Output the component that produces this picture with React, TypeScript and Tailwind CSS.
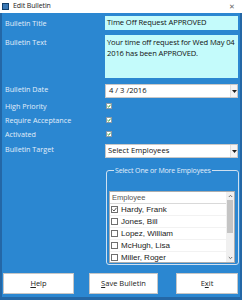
import React from 'react';

const employees = [
  { name: 'Hardy, Frank', checked: true },
  { name: 'Jones, Bill', checked: false },
  { name: 'Lopez, William', checked: false },
  { name: 'McHugh, Lisa', checked: false },
  { name: 'Miller, Roger', checked: false },
];

function GreenCheck() {
  return (
    <div className="w-[6px] h-[6px] bg-white border border-[#8c9aa6] flex items-center justify-center">
      <svg width="4" height="4" viewBox="0 0 4 4">
        <path d="M0.4 2 L1.6 3.2 L3.6 0.7" stroke="#2f9e2f" strokeWidth="1" fill="none" />
      </svg>
    </div>
  );
}

function DropArrow() {
  return (
    <div className="w-[7px] h-full flex items-center justify-center border-l border-[#e0e0e0] bg-[#f4f4f4]">
      <svg width="5" height="3" viewBox="0 0 5 3">
        <path d="M0 0 L5 0 L2.5 3 Z" fill="#222" />
      </svg>
    </div>
  );
}

export default function App() {
  const label = 'pl-[3px] flex items-center text-[7.2px] text-[#e2eefa]';
  return (
    <div className="w-[242px] h-[300px] flex flex-col bg-white overflow-hidden" style={{ fontFamily: '"Open Sans", "Noto Sans", sans-serif' }}>
      {/* title bar */}
      <div className="h-[13px] shrink-0 flex items-center px-[2px] bg-white">
        <div className="w-[7px] h-[7px] bg-[#3a78b5] border border-[#123f6b] mr-[4px]" />
        <span className="text-[7px] text-[#222] tracking-[-0.1px]">Edit Bulletin</span>
        <span className="ml-auto mr-[5px] text-[7px] text-[#666] leading-none">✕</span>
      </div>

      {/* body */}
      <div className="h-[287px] shrink-0 flex flex-col bg-[#2b87d1] border-l-[2px] border-r-[2px] border-b-[3px] border-[#2467a6] pt-[3px]">
        <div className="grid grid-cols-[103px_133px]">
          <div className={label + ' h-[14px]'}>Bulletin Title</div>
          <div className="h-[14px] bg-[#c4fbfb] flex items-center px-[2px] text-[7.6px] tracking-[-0.1px] text-[#111]">Time Off Request APPROVED</div>

          <div className={label + ' h-[14px] mt-[5px] items-start pt-[2px]'}>Bulletin Text</div>
          <div className="mt-[5px] h-[43px] bg-[#c4fbfb] px-[2px] pt-[2px] text-[7.6px] leading-[11px] tracking-[-0.15px] text-[#111]">
            Your time off request for Wed May 04 2016 has been APPROVED.
          </div>

          <div className={label + ' h-[11px] mt-[6px]'}>Bulletin Date</div>
          <div className="mt-[6px] h-[14px] bg-white border border-[#c8c8c8] flex items-center">
            <span className="flex-1 px-[3px] text-[7.6px] text-[#111]">4 / 3 /2016</span>
            <DropArrow />
          </div>

          <div className={label + ' mt-[1px] h-[14px]'}>High Priority</div>
          <div className="mt-[1px] h-[14px] flex items-center pl-[1px]"><GreenCheck /></div>

          <div className={label + ' h-[14px]'}>Require Acceptance</div>
          <div className="h-[14px] flex items-center pl-[1px]"><GreenCheck /></div>

          <div className={label + ' h-[14px]'}>Activated</div>
          <div className="h-[14px] flex items-center pl-[1px]"><GreenCheck /></div>

          <div className={label + ' mt-[3px] h-[11px]'}>Bulletin Target</div>
          <div className="mt-[3px] h-[14px] bg-white border border-[#c8c8c8] flex items-center">
            <span className="flex-1 px-[2px] text-[7.6px] text-[#111]">Select Employees</span>
            <DropArrow />
          </div>
        </div>

        {/* group box */}
        <div className="ml-[104px] mr-[1px] mt-[12px] h-[95px] shrink-0 relative border border-[#cfe0f0] rounded-[3px]">
          <span className="absolute -top-[6px] left-[7px] px-[1px] bg-[#2b87d1] text-[7px] leading-[11px] tracking-[-0.15px] text-[#e2eefa]">
            Select One or More Employees
          </span>
          <div className="mt-[20px] ml-[2px] mr-[3px] h-[72px] bg-white border border-[#adadad] flex overflow-hidden" style={{ fontFamily: '"Liberation Sans", Arial, sans-serif' }}>
            <div className="flex-1 flex flex-col">
              <div className="h-[12px] shrink-0 flex items-center px-[2px] text-[7.5px] text-[#555] border-b border-[#d9d9d9]">Employee</div>
              {employees.map((e) => (
                <div key={e.name} className="h-[12px] shrink-0 flex items-center pl-[1px] gap-[3px] border-b border-[#f2f2f2]">
                  <div className="w-[7px] h-[7px] border border-[#6f6f6f] bg-white flex items-center justify-center">
                    {e.checked && (
                      <svg width="5" height="5" viewBox="0 0 5 5">
                        <path d="M0.5 2.5 L2 4 L4.5 0.8" stroke="#444" strokeWidth="0.9" fill="none" />
                      </svg>
                    )}
                  </div>
                  <span className="text-[8px] text-[#222]">{e.name}</span>
                </div>
              ))}
            </div>
            <div className="w-[8px] flex flex-col items-center bg-[#f0f0f0]">
              <svg width="5" height="8" viewBox="0 0 5 8" className="shrink-0">
                <path d="M0.8 5 L2.5 3.3 L4.2 5" stroke="#606060" strokeWidth="0.9" fill="none" />
              </svg>
              <div className="w-[6px] h-[33px] bg-[#c4c4c4]" />
              <div className="flex-1" />
              <svg width="5" height="8" viewBox="0 0 5 8" className="shrink-0">
                <path d="M0.8 3 L2.5 4.7 L4.2 3" stroke="#606060" strokeWidth="0.9" fill="none" />
              </svg>
            </div>
          </div>
        </div>

        {/* buttons */}
        <div className="mt-[8px] flex items-start pl-[1px]">
          <button className="w-[71px] h-[21px] bg-white border border-[#c6c6c6] text-[7.5px] text-[#222]"><u>H</u>elp</button>
          <button className="ml-[15px] w-[69px] h-[21px] bg-white border border-[#c6c6c6] text-[7.5px] text-[#222]"><u>S</u>ave Bulletin</button>
          <button className="ml-[18px] w-[62px] h-[21px] bg-white border border-[#c6c6c6] text-[7.5px] text-[#222]">E<u>x</u>it</button>
        </div>
      </div>
    </div>
  );
}
